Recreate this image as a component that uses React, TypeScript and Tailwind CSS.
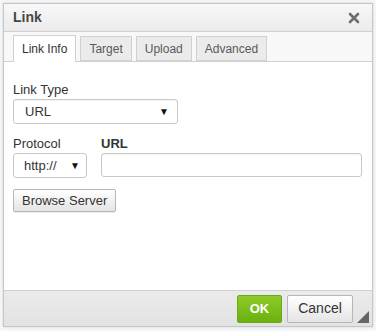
export default function App() {
  return (
    <div
      className="w-[376px] h-[331px] bg-[#f5f7fa] p-[3px] pb-[4px]"
      style={{ fontFamily: '"Liberation Sans", Arial, sans-serif' }}
    >
      <div className="flex flex-col h-full border border-[#c6c6c6] bg-white shadow-[0_0_3px_rgba(0,0,0,0.15)]">
        {/* title bar */}
        <div className="flex items-center justify-between h-[28px] px-[9px] bg-gradient-to-b from-[#f8f8f8] to-[#ebebeb] border-b border-[#d1d1d1]">
          <span className="text-[14px] font-bold text-[#474747]">Link</span>
          <svg width="12" height="12" viewBox="0 0 12 12" className="mr-[3px]">
            <path d="M2 2 L10 10 M10 2 L2 10" stroke="#6d6d6d" strokeWidth="2.6" strokeLinecap="round" />
          </svg>
        </div>
        {/* tabs */}
        <div className="flex items-end gap-[4px] h-[30px] px-[9px] bg-[#f8f8f8] border-b border-[#d1d1d1]">
          <div className="h-[27px] px-[8px] flex items-center bg-white border border-[#d1d1d1] border-b-0 text-[12px] text-[#333] -mb-px">
            Link Info
          </div>
          <div className="h-[25px] px-[8px] flex items-center bg-[#ebebeb] border border-[#d1d1d1] text-[12px] text-[#595959]">
            Target
          </div>
          <div className="h-[25px] px-[8px] flex items-center bg-[#ebebeb] border border-[#d1d1d1] text-[12px] text-[#595959]">
            Upload
          </div>
          <div className="h-[25px] px-[8px] flex items-center bg-[#ebebeb] border border-[#d1d1d1] text-[12px] text-[#595959]">
            Advanced
          </div>
        </div>
        {/* content */}
        <div className="flex-1 px-[9px] pt-[20px] text-[13px] text-[#333]">
          <div className="leading-[16px]">Link Type</div>
          <div className="mt-[1px] w-[165px] h-[25px] border border-[#c9c9c9] rounded-[3px] flex items-center justify-between pl-[11px] pr-[8px] shadow-[inset_0_1px_1px_rgba(0,0,0,0.05)]">
            <span className="text-[13px] text-[#333]">URL</span>
            <span className="text-[10px] text-[#111]">▼</span>
          </div>
          <div className="flex gap-[14px] mt-[12px]">
            <div className="flex flex-col">
              <div className="leading-[16px]">Protocol</div>
              <div className="mt-[1px] w-[74px] h-[25px] border border-[#c9c9c9] rounded-[3px] flex items-center justify-between pl-[10px] pr-[6px]">
                <span className="text-[13px] text-[#333]">http://</span>
                <span className="text-[10px] text-[#111]">▼</span>
              </div>
            </div>
            <div className="flex flex-col flex-1 pr-[1px]">
              <div className="leading-[16px] font-bold">URL</div>
              <div className="mt-[1px] h-[24px] border border-[#c9c9c9] rounded-[3px] shadow-[inset_0_1px_1px_rgba(0,0,0,0.05)]" />
            </div>
          </div>
          <button className="mt-[11px] h-[23px] px-[8px] border border-[#b6b6b6] rounded-[2px] bg-gradient-to-b from-[#ffffff] to-[#e4e4e4] text-[13px] text-[#333] shadow-[0_1px_0_rgba(0,0,0,0.08)]">
            Browse Server
          </button>
        </div>
        {/* footer */}
        <div className="relative flex items-center justify-end gap-[5px] h-[36px] pr-[19px] bg-gradient-to-b from-[#ebebeb] to-[#e2e2e2] border-t border-[#d1d1d1]">
          <button className="h-[28px] w-[45px] rounded-[2px] border border-[#6ba81e] bg-gradient-to-b from-[#8fcb28] to-[#69b10b] text-white text-[13px] font-bold">
            OK
          </button>
          <button className="h-[28px] w-[66px] rounded-[2px] border border-[#b6b6b6] bg-gradient-to-b from-[#ffffff] to-[#e4e4e4] text-[14px] text-[#333]">
            Cancel
          </button>
          <svg width="12" height="12" viewBox="0 0 12 12" className="absolute right-[3px] bottom-[3px]">
            <path d="M12 0 L12 12 L0 12 Z" fill="#656565" />
          </svg>
        </div>
      </div>
    </div>
  );
}
